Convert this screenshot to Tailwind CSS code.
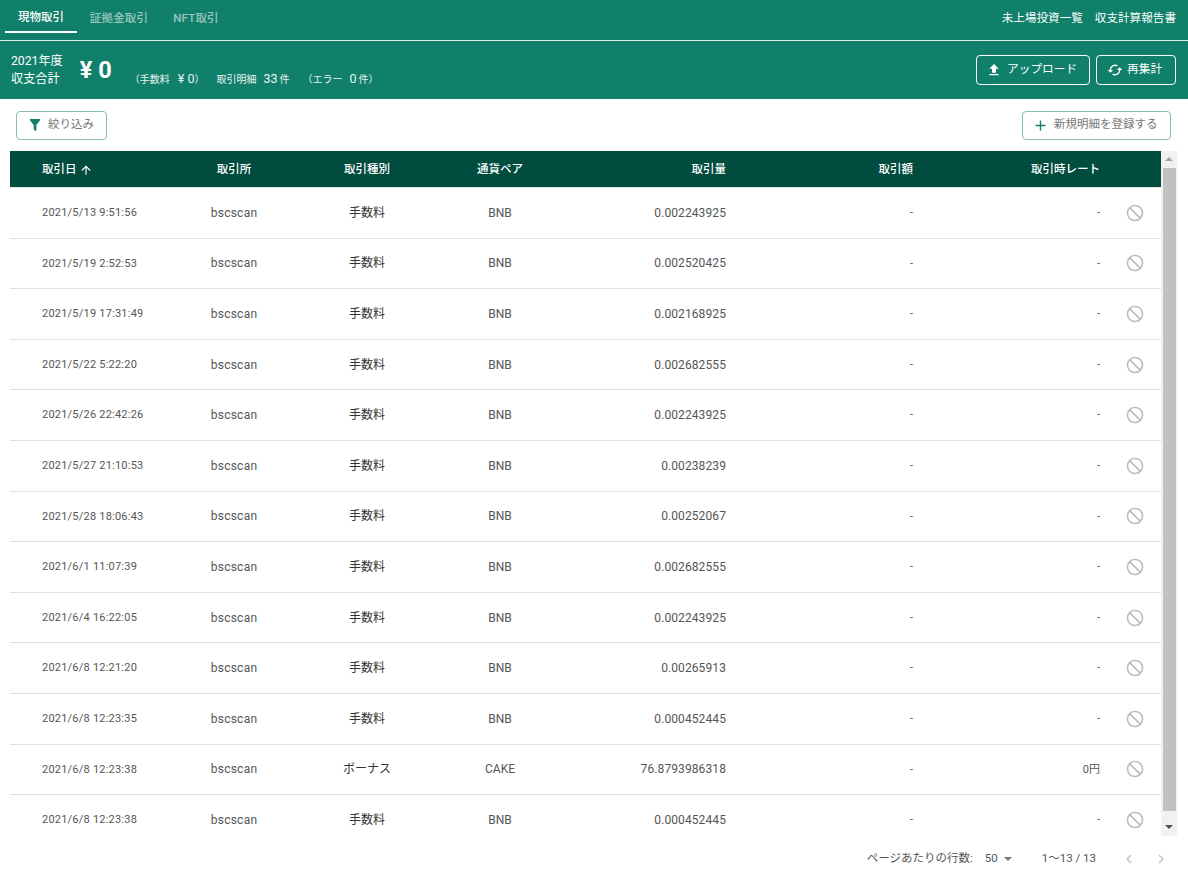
<!DOCTYPE html>
<html lang="ja">
<head>
    <meta charset="UTF-8">
    <meta name="viewport" content="width=device-width, initial-scale=1.0">
    <script src="https://cdn.jsdelivr.net/npm/@tailwindcss/browser@4"></script>
    <title>取引一覧</title>
</head>
<body class="h-[873px] w-[1188px] overflow-hidden bg-white font-['Roboto','Noto_Sans_CJK_JP',sans-serif] text-[#333]">
    <!-- タブ -->
    <div class="flex h-[41px] items-center justify-between border-b border-[#e4ece9] bg-[#11806a] pl-[5px] pr-3">
        <div class="flex h-full text-[11.5px] font-medium">
            <div class="flex h-[33px] w-[72px] items-center justify-center border-b-2 border-white pt-[5px] text-white">現物取引</div>
            <div class="flex h-[33px] w-[84px] items-center justify-center pt-[5px] tracking-[0.2px] text-white/55">証拠金取引</div>
            <div class="ml-[5px] flex h-[33px] w-[60px] items-center justify-center pt-[5px] tracking-[0.2px] text-white/55">NFT取引</div>
        </div>
        <div class="flex gap-3 pb-[2px] text-[11.6px] text-white">
            <span>未上場投資一覧</span>
            <span>収支計算報告書</span>
        </div>
    </div>

    <!-- 収支合計 -->
    <div class="flex h-[58px] items-center justify-between bg-[#11806a] pl-[11px] pr-3 text-white">
        <div class="flex items-start">
            <div class="text-[12.2px] leading-[18px]">2021年度<br>収支合計</div>
            <div class="ml-[17px] mt-[3px] text-[23.5px] font-bold leading-[30px]">¥ 0</div>
            <div class="ml-[18px] mt-[19px] flex items-baseline text-[10px] leading-[16px] text-white/90">
                <span>（手数料<span class="ml-[8px] text-[12.5px]">¥ 0</span><span class="text-[10px]">）</span></span>
                <span class="ml-[12px]">取引明細<span class="ml-[7px] text-[12.5px]">33</span><span class="ml-[2px]">件</span></span>
                <span class="ml-[13px]">（エラー<span class="ml-[7px] text-[12.5px]">0</span><span class="ml-[2px]">件）</span></span>
            </div>
        </div>
        <div class="flex gap-[6px]">
            <button class="flex h-[30px] w-[114px] items-center gap-[5px] rounded-[4px] border border-white pl-[9px] text-[11.7px]">
                <svg class="h-[16px] w-[16px] fill-white" viewBox="0 0 24 24"><path d="M9 16v-6H5l7-7 7 7h-4v6H9zm-4 2h14v2H5z"/></svg>
                アップロード
            </button>
            <button class="flex h-[30px] w-[80px] items-center gap-[4px] rounded-[4px] border border-white pl-[10px] text-[11.7px]">
                <svg class="h-[16px] w-[16px] fill-white" viewBox="0 0 24 24"><path d="M19 8l-4 4h3a6 6 0 0 1-8.8 5.3l-1.46 1.46A8 8 0 0 0 20 12h3l-4-4zM6 12a6 6 0 0 1 8.8-5.3l1.46-1.46A8 8 0 0 0 4 12H1l4 4 4-4H6z"/></svg>
                再集計
            </button>
        </div>
    </div>

    <!-- 操作ボタン -->
    <div class="flex h-[52px] items-center justify-between pl-4 pr-[17px]">
        <button class="flex h-[29px] w-[91px] items-center gap-[5px] rounded-[4px] border border-[#88bfb3] pl-[10px] text-[11.5px] text-[#777]">
            <svg class="h-[16px] w-[16px] fill-[#11806a]" viewBox="0 0 24 24"><path d="M14 12v7.88c.04.3-.06.62-.29.83a1 1 0 0 1-1.41 0l-2.01-2.01a.989.989 0 0 1-.29-.83V12h-.03L4.21 4.62a1 1 0 0 1 .17-1.4c.19-.14.4-.22.62-.22h14c.22 0 .43.08.62.22a1 1 0 0 1 .17 1.4L14.03 12H14z"/></svg>
            絞り込み
        </button>
        <button class="flex h-[29px] w-[149px] items-center gap-[5px] rounded-[4px] border border-[#88bfb3] pl-[9px] text-[11.5px] text-[#777]">
            <svg class="h-[17px] w-[17px] fill-[#11806a]" viewBox="0 0 24 24"><path d="M19 13h-6v6h-2v-6H5v-2h6V5h2v6h6v2z"/></svg>
            新規明細を登録する
        </button>
    </div>

    <!-- テーブル -->
    <div class="ml-[10px] flex h-[685px] w-[1167px]">
        <div class="w-[1151px] overflow-hidden">
            <div class="grid h-[37px] grid-cols-[158px_132px_134px_132px_176px_187px_187px_45px] items-center border-b border-[#e0ebe8] bg-[#004d40] pt-px text-[11.5px] font-medium text-white">
                <div class="flex items-center gap-[2px] pl-[32px]">取引日
                    <svg class="h-[14px] w-[14px] fill-white" viewBox="0 0 24 24"><path d="M13 20h-2V8l-5.5 5.5-1.42-1.42L12 4.16l7.92 7.92-1.42 1.42L13 8v12z"/></svg>
                </div>
                <div class="text-center">取引所</div>
                <div class="text-center">取引種別</div>
                <div class="text-center">通貨ペア</div>
                <div class="pr-4 text-right">取引量</div>
                <div class="pr-4 text-right">取引額</div>
                <div class="pr-4 text-right">取引時レート</div>
                <div></div>
            </div>
            <div id="rows"></div>
        </div>
        <!-- スクロールバー -->
        <div class="flex w-[16px] flex-col items-center bg-[#f1f1f1]">
            <div class="mt-[6px] h-0 w-0 border-x-[4px] border-b-[4px] border-x-transparent border-b-[#a3a3a3]"></div>
            <div class="mt-[7px] h-[643px] w-[13px] bg-[#c1c1c1]"></div>
            <div class="mt-[14px] h-0 w-0 border-x-[4px] border-t-[4px] border-x-transparent border-t-[#505050]"></div>
        </div>
    </div>

    <!-- ページネーション -->
    <div class="flex h-[37px] items-center justify-end pr-[18px] pt-[8px] text-[11.5px] text-[#555]">
        <span>ページあたりの行数:</span>
        <span class="ml-[12px] text-[#4a5a6a]">50</span>
        <span class="ml-[6px] h-0 w-0 border-x-[4px] border-t-[4px] border-x-transparent border-t-[#777]"></span>
        <span class="ml-[30px]">1〜13 / 13</span>
        <svg class="ml-[24px] h-[18px] w-[18px] fill-[#c4c4c4]" viewBox="0 0 24 24"><path d="M15.41 16.58L10.83 12l4.58-4.59L14 6l-6 6 6 6 1.41-1.42z"/></svg>
        <svg class="ml-[14px] h-[18px] w-[18px] fill-[#c4c4c4]" viewBox="0 0 24 24"><path d="M8.59 16.58L13.17 12 8.59 7.41 10 6l6 6-6 6-1.41-1.42z"/></svg>
    </div>

    <script>
        const data = [
            ["2021/5/13 9:51:56", "手数料", "BNB", "0.002243925", "-"],
            ["2021/5/19 2:52:53", "手数料", "BNB", "0.002520425", "-"],
            ["2021/5/19 17:31:49", "手数料", "BNB", "0.002168925", "-"],
            ["2021/5/22 5:22:20", "手数料", "BNB", "0.002682555", "-"],
            ["2021/5/26 22:42:26", "手数料", "BNB", "0.002243925", "-"],
            ["2021/5/27 21:10:53", "手数料", "BNB", "0.00238239", "-"],
            ["2021/5/28 18:06:43", "手数料", "BNB", "0.00252067", "-"],
            ["2021/6/1 11:07:39", "手数料", "BNB", "0.002682555", "-"],
            ["2021/6/4 16:22:05", "手数料", "BNB", "0.002243925", "-"],
            ["2021/6/8 12:21:20", "手数料", "BNB", "0.00265913", "-"],
            ["2021/6/8 12:23:35", "手数料", "BNB", "0.000452445", "-"],
            ["2021/6/8 12:23:38", "ボーナス", "CAKE", "76.8793986318", "0円"],
            ["2021/6/8 12:23:38", "手数料", "BNB", "0.000452445", "-"],
        ];
        document.getElementById("rows").innerHTML = data.map(r => `
            <div class="grid h-[50.6px] grid-cols-[158px_132px_134px_132px_176px_187px_187px_45px] items-center border-b border-[#e0e0e0] text-[11px] text-[#555]">
                <div class="pl-[32px] pt-px tracking-[0.22px]">${r[0]}</div>
                <div class="text-center text-[12px] tracking-[0.25px]">bscscan</div>
                <div class="text-center text-[12px] text-[#333]">${r[1]}</div>
                <div class="text-center text-[12px]">${r[2]}</div>
                <div class="pr-4 text-right text-[12px] tracking-[0.1px]">${r[3]}</div>
                <div class="pr-4 pt-px text-right">-</div>
                <div class="pr-4 pt-px text-right">${r[4]}</div>
                <div class="pl-[9px]">
                    <svg class="h-[20px] w-[20px] -scale-x-100 fill-[#bdbdbd]" viewBox="0 0 24 24"><path d="M12 2a10 10 0 1 0 0 20 10 10 0 0 0 0-20zm0 2c1.85 0 3.55.63 4.9 1.69L5.69 16.9A8 8 0 0 1 12 4zm0 16c-1.85 0-3.55-.63-4.9-1.69L18.31 7.1A8 8 0 0 1 12 20z"/></svg>
                </div>
            </div>`).join("");
    </script>
</body>
</html>
